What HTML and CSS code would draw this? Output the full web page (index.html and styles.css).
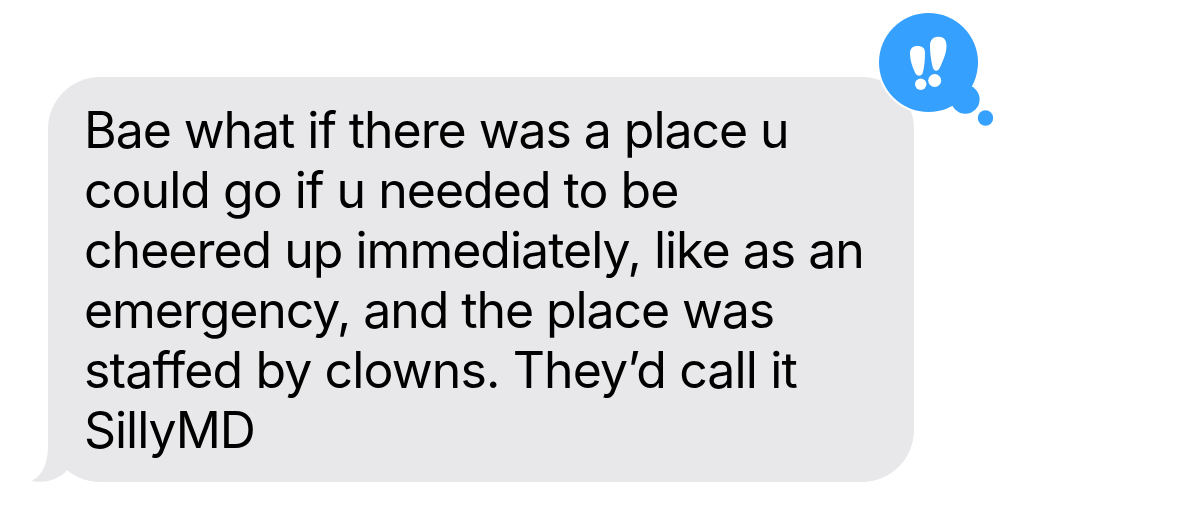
FILE: index.html
```html
<!DOCTYPE html>
<html lang="en">
<head>
  <meta charset="UTF-8">
  <meta name="viewport" content="width=device-width, initial-scale=1.0">
  <title>Messages</title>
  <link rel="stylesheet" href="styles.css">
</head>
<body>
  <div class="chat">
    <div class="bubble">
      <p class="text">
        <span class="line line1">Bae what if there was a place u</span>
        <span class="line line2">could go if u needed to be</span>
        <span class="line line3">cheered up immediately, like as an</span>
        <span class="line line4">emergency, and the place was</span>
        <span class="line line5">staffed by clowns. They’d call it</span>
        <span class="line line6">SillyMD</span>
      </p>

      <svg class="tail" width="52" height="62" viewBox="0 0 52 62">
        <path d="M16 0V25C16 43 11 55 0 60.500C0 61 2 61.800 8 61.800C19 61.500 28 57.500 35 50.500L45 35V0Z"/>
      </svg>

      <svg class="reaction" width="120" height="118" viewBox="0 0 120 118">
        <circle class="ring" cx="53.5" cy="52.5" r="51.5"/>
        <g class="blue">
          <circle cx="53.5" cy="52.5" r="49.5"/>
          <circle cx="90.3" cy="89.4" r="14.3"/>
          <circle cx="110.5" cy="108" r="7.7"/>
        </g>
        <g class="marks">
          <path d="M42.5 36C37.5 36 35 38.500 35 43.500C35 50 37.500 57 40 62.500C42 67 47 67 48 62C49.500 56 50 49 50 43C50 38 47.500 36 42.500 36Z"/>
          <path d="M63 26.700C57.500 27 55 30.500 55 36C55 43 56 50 57.500 56.500C58.800 62 63.200 62 65.200 57C68.200 50 71.500 43 71.500 36C71.500 29.500 68.500 26.500 63 26.700Z"/>
          <circle cx="45.7" cy="74.300" r="5.7"/>
          <circle cx="59.7" cy="70.500" r="6.5"/>
        </g>
      </svg>
    </div>
  </div>
</body>
</html>
```
FILE: styles.css
```css
body {
  margin: 0;
  background: #fff;
  font-family: Inter, "Liberation Sans", sans-serif;
}

.chat {
  padding: 77px 0 0 48px;
}

.bubble {
  position: relative;
  box-sizing: border-box;
  width: 866px;
  height: 405px;
  padding: 23px 0 22px 36px;
  border-radius: 52px;
  background: #e8e8ea;
}

.text {
  margin: 0;
  font-size: 50px;
  line-height: 60px;
  color: #000;
}

.line {
  display: block;
  white-space: nowrap;
}

.line1 { letter-spacing: -1.07px; }
.line2 { letter-spacing: -0.98px; }
.line3 { letter-spacing: -1px; }
.line4 { letter-spacing: -1.1px; }
.line5 { letter-spacing: -0.88px; }
.line6 { letter-spacing: -1.05px; }

.tail {
  position: absolute;
  left: -16px;
  bottom: 0;
  fill: #e8e8ea;
}

/* tapback sits over the top right corner */
.reaction {
  position: absolute;
  left: 827px;
  top: -67px;
}

.ring,
.marks {
  fill: #fff;
}

.blue {
  fill: #35a0fd;
}
```
